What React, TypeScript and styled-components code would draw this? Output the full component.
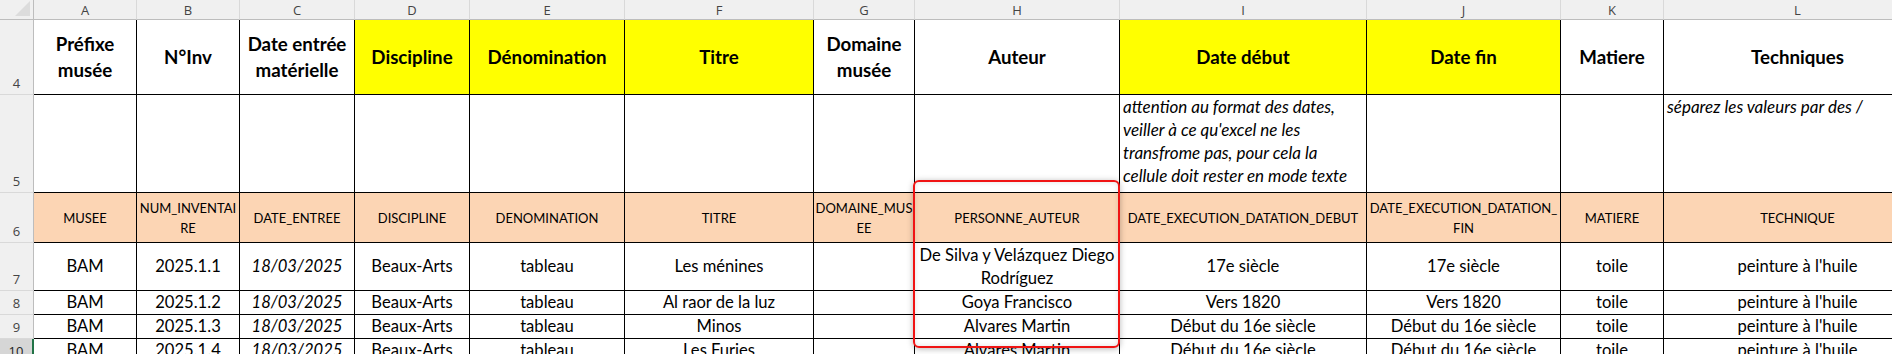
import React from 'react';
import styled, { createGlobalStyle } from 'styled-components';

const GlobalStyle = createGlobalStyle`
  html, body {
    margin: 0;
    padding: 0;
    background: #ffffff;
    overflow: hidden;
  }
`;

const COL_WIDTHS = [34, 103, 103, 115, 115, 155, 189, 101, 205, 247, 194, 103, 268];
const ROW_HEIGHTS = [20, 75, 98, 50, 48, 24, 24, 24];

const Sheet = styled.div`
  position: relative;
  width: 1892px;
  height: 354px;
  overflow: hidden;
  display: grid;
  grid-template-columns: ${COL_WIDTHS.map((w) => `${w}px`).join(' ')};
  grid-template-rows: ${ROW_HEIGHTS.map((h) => `${h}px`).join(' ')};
  font-family: Lato, 'Liberation Sans', sans-serif;
  color: #000;
`;

const Corner = styled.div`
  position: relative;
  background: #f0f0f0;
  border-right: 1px solid #bdbdbd;
  border-bottom: 1px solid #bdbdbd;
  box-sizing: border-box;
  svg {
    display: block;
  }
`;

const ColHead = styled.div`
  background: #f0f0f0;
  border-right: 1px solid #d9d9d9;
  border-bottom: 1px solid #bdbdbd;
  box-sizing: border-box;
  display: flex;
  align-items: center;
  justify-content: center;
  font-family: 'Open Sans', 'Noto Sans', sans-serif;
  font-size: 13px;
  color: #444;
`;

const RowHead = styled.div<{ $active?: boolean }>`
  background: ${(p) => (p.$active ? '#d6d6d6' : '#f0f0f0')};
  border-right: ${(p) => (p.$active ? '2px solid #217346' : '1px solid #bdbdbd')};
  border-bottom: 1px solid #d9d9d9;
  box-sizing: border-box;
  display: flex;
  align-items: flex-end;
  justify-content: center;
  padding-bottom: 2px;
  font-family: 'Open Sans', 'Noto Sans', sans-serif;
  font-size: 13px;
  color: ${(p) => (p.$active ? '#222' : '#444')};
`;

type Kind = 'title' | 'note' | 'field' | 'data';

const Cell = styled.div<{ $bg?: string; $kind: Kind; $italic?: boolean }>`
  background: ${(p) => p.$bg || '#ffffff'};
  border-right: 1px solid #000;
  border-bottom: 1px solid #000;
  box-sizing: border-box;
  overflow: hidden;
  display: flex;
  flex-direction: column;
  align-items: ${(p) => (p.$kind === 'note' ? 'flex-start' : 'center')};
  justify-content: ${(p) => (p.$kind === 'note' ? 'flex-start' : 'center')};
  text-align: ${(p) => (p.$kind === 'note' ? 'left' : 'center')};
  padding: ${(p) => (p.$kind === 'note' ? '0 3px' : '0 2px')};
  white-space: nowrap;
  font-weight: ${(p) => (p.$kind === 'title' ? 700 : 400)};
  font-style: ${(p) => (p.$italic || p.$kind === 'note' ? 'italic' : 'normal')};
  font-size: ${(p) =>
    p.$kind === 'title' ? '18.7px' : p.$kind === 'field' ? '13px' : p.$kind === 'note' ? '17px' : '16.6px'};
  line-height: ${(p) => (p.$kind === 'title' ? '26px' : p.$kind === 'field' ? '20px' : '23px')};
`;

const Highlight = styled.div`
  position: absolute;
  left: 913px;
  top: 180px;
  width: 207px;
  height: 168px;
  box-sizing: border-box;
  border: 2px solid #f01414;
  border-radius: 6px;
  box-shadow: 0 1px 6px rgba(0, 0, 0, 0.28), inset 0 0 5px rgba(0, 0, 0, 0.12);
  pointer-events: none;
`;

const YELLOW = '#ffff00';
const PEACH = '#fcd5b4';

const letters = ['A', 'B', 'C', 'D', 'E', 'F', 'G', 'H', 'I', 'J', 'K', 'L'];

const titles: { lines: string[]; bg?: string }[] = [
  { lines: ['Préfixe', 'musée'] },
  { lines: ['N°Inv'] },
  { lines: ['Date entrée', 'matérielle'] },
  { lines: ['Discipline'], bg: YELLOW },
  { lines: ['Dénomination'], bg: YELLOW },
  { lines: ['Titre'], bg: YELLOW },
  { lines: ['Domaine', 'musée'] },
  { lines: ['Auteur'] },
  { lines: ['Date début'], bg: YELLOW },
  { lines: ['Date fin'], bg: YELLOW },
  { lines: ['Matiere'] },
  { lines: ['Techniques'] },
];

const notes: string[][] = [
  [], [], [], [], [], [], [], [],
  ['attention au format des dates,', "veiller à ce qu'excel ne les", 'transfrome pas, pour cela la', 'cellule doit rester en mode texte'],
  [],
  [],
  ['séparez les valeurs par des /'],
];

const fields: string[][] = [
  ['MUSEE'],
  ['NUM_INVENTAI', 'RE'],
  ['DATE_ENTREE'],
  ['DISCIPLINE'],
  ['DENOMINATION'],
  ['TITRE'],
  ['DOMAINE_MUS', 'EE'],
  ['PERSONNE_AUTEUR'],
  ['DATE_EXECUTION_DATATION_DEBUT'],
  ['DATE_EXECUTION_DATATION_', 'FIN'],
  ['MATIERE'],
  ['TECHNIQUE'],
];

const records: { num: string; titre: string; auteur: string[]; debut: string; fin: string }[] = [
  { num: '2025.1.1', titre: 'Les ménines', auteur: ['De Silva y Velázquez Diego', 'Rodríguez'], debut: '17e siècle', fin: '17e siècle' },
  { num: '2025.1.2', titre: 'Al raor de la luz', auteur: ['Goya Francisco'], debut: 'Vers 1820', fin: 'Vers 1820' },
  { num: '2025.1.3', titre: 'Minos', auteur: ['Alvares Martin'], debut: 'Début du 16e siècle', fin: 'Début du 16e siècle' },
  { num: '2025.1.4', titre: 'Les Furies', auteur: ['Alvares Martin'], debut: 'Début du 16e siècle', fin: 'Début du 16e siècle' },
];

const Lines = ({ lines }: { lines: string[] }) => (
  <>
    {lines.map((l, i) => (
      <span key={i}>{l}</span>
    ))}
  </>
);

export default function App() {
  return (
    <>
      <GlobalStyle />
      <Sheet>
        <Corner>
          <svg width="33" height="19" viewBox="0 0 33 19">
            <polygon points="30,1 30,16 15,16" fill="#dcdcdc" />
          </svg>
        </Corner>
        {letters.map((l) => (
          <ColHead key={l}>{l}</ColHead>
        ))}

        <RowHead>4</RowHead>
        {titles.map((t, i) => (
          <Cell key={i} $kind="title" $bg={t.bg}>
            <Lines lines={t.lines} />
          </Cell>
        ))}

        <RowHead>5</RowHead>
        {notes.map((n, i) => (
          <Cell key={i} $kind="note">
            <Lines lines={n} />
          </Cell>
        ))}

        <RowHead>6</RowHead>
        {fields.map((f, i) => (
          <Cell key={i} $kind="field" $bg={PEACH}>
            <Lines lines={f} />
          </Cell>
        ))}

        {records.map((r, idx) => {
          const values: string[][] = [
            ['BAM'],
            [r.num],
            ['18/03/2025'],
            ['Beaux-Arts'],
            ['tableau'],
            [r.titre],
            [],
            r.auteur,
            [r.debut],
            [r.fin],
            ['toile'],
            ["peinture à l'huile"],
          ];
          return (
            <React.Fragment key={r.num}>
              <RowHead $active={idx === 3}>{7 + idx}</RowHead>
              {values.map((v, i) => (
                <Cell key={i} $kind="data" $italic={i === 2}>
                  <Lines lines={v} />
                </Cell>
              ))}
            </React.Fragment>
          );
        })}

        <Highlight />
      </Sheet>
    </>
  );
}
